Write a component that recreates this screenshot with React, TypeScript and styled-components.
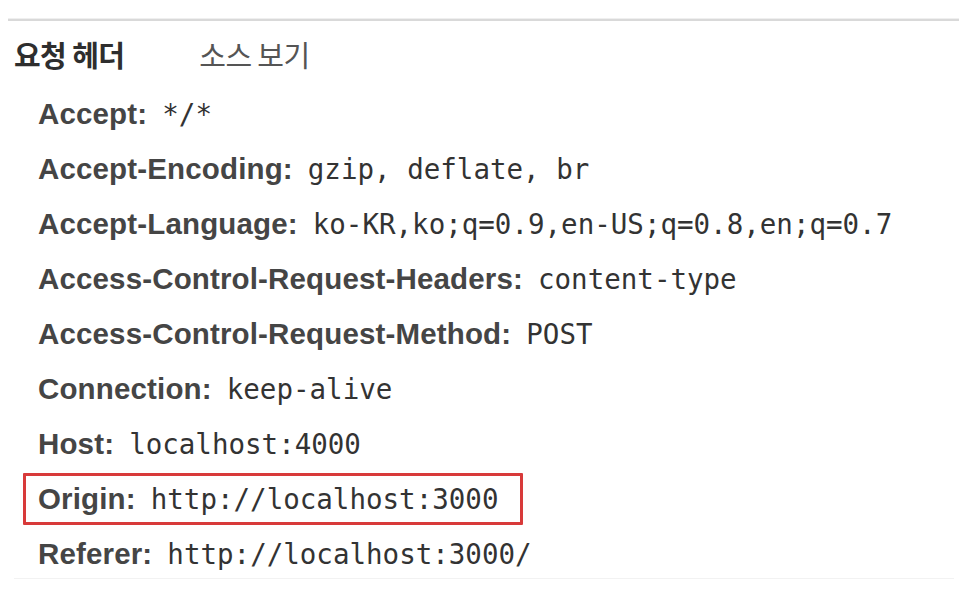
import React from "react";
import styled, { createGlobalStyle } from "styled-components";

const Global = createGlobalStyle`
  html, body { margin: 0; padding: 0; background: #ffffff; }
  body { width: 976px; height: 612px; overflow: hidden; }
`;

const Page = styled.div`
  width: 976px;
  height: 612px;
  background: #fff;
  padding-top: 18px;
  box-sizing: border-box;
`;

const TopRule = styled.div`
  margin: 0 17px 0 8px;
  height: 2px;
  background: #d9d9d9;
  border-top: 1px solid #efefef;
`;

const Tabs = styled.div`
  height: 65.5px;
  display: flex;
  align-items: center;
  padding-left: 14px;
  gap: 75px;
  font-family: "Noto Sans CJK KR", "Noto Sans", sans-serif;
  font-size: 29px;
`;

const Tab = styled.span<{ $active?: boolean }>`
  font-weight: ${(p) => (p.$active ? 700 : 400)};
  color: ${(p) => (p.$active ? "#2e2e2e" : "#555")};
  letter-spacing: -0.6px;
`;

const List = styled.div`
  display: flex;
  flex-direction: column;
`;

const Row = styled.div<{ $marked?: boolean }>`
  height: 55px;
  display: flex;
  align-items: center;
  box-sizing: border-box;
  padding-left: 38px;
  white-space: nowrap;
  ${(p) =>
    p.$marked &&
    `
    height: 52px;
    margin: 1.5px 0 1.5px 23px;
    width: 500px;
    padding-left: 12px;
    border: 3px solid #d83a3a;
    border-radius: 1px;
  `}
`;

const Label = styled.span`
  font-family: "Liberation Sans", Arial, sans-serif;
  font-weight: 700;
  font-size: 29.5px;
  letter-spacing: 0.15px;
  color: #454545;
`;

const Value = styled.span`
  font-family: "DejaVu Sans Mono", monospace;
  font-size: 27.5px;
  color: #333;
  margin-left: 15px;
`;

const BottomRule = styled.div`
  margin: -4px 22px 0 14px;
  height: 1px;
  background: #f2f2f2;
`;

const headers: { name: string; value: string; marked?: boolean }[] = [
  { name: "Accept", value: "*/*" },
  { name: "Accept-Encoding", value: "gzip, deflate, br" },
  { name: "Accept-Language", value: "ko-KR,ko;q=0.9,en-US;q=0.8,en;q=0.7" },
  { name: "Access-Control-Request-Headers", value: "content-type" },
  { name: "Access-Control-Request-Method", value: "POST" },
  { name: "Connection", value: "keep-alive" },
  { name: "Host", value: "localhost:4000" },
  { name: "Origin", value: "http://localhost:3000", marked: true },
  { name: "Referer", value: "http://localhost:3000/" },
];

export default function App() {
  return (
    <Page>
      <Global />
      <TopRule />
      <Tabs>
        <Tab $active>요청 헤더</Tab>
        <Tab>소스 보기</Tab>
      </Tabs>
      <List>
        {headers.map((h) => (
          <Row key={h.name} $marked={h.marked}>
            <Label>{h.name}:</Label>
            <Value>{h.value}</Value>
          </Row>
        ))}
      </List>
      <BottomRule />
    </Page>
  );
}
